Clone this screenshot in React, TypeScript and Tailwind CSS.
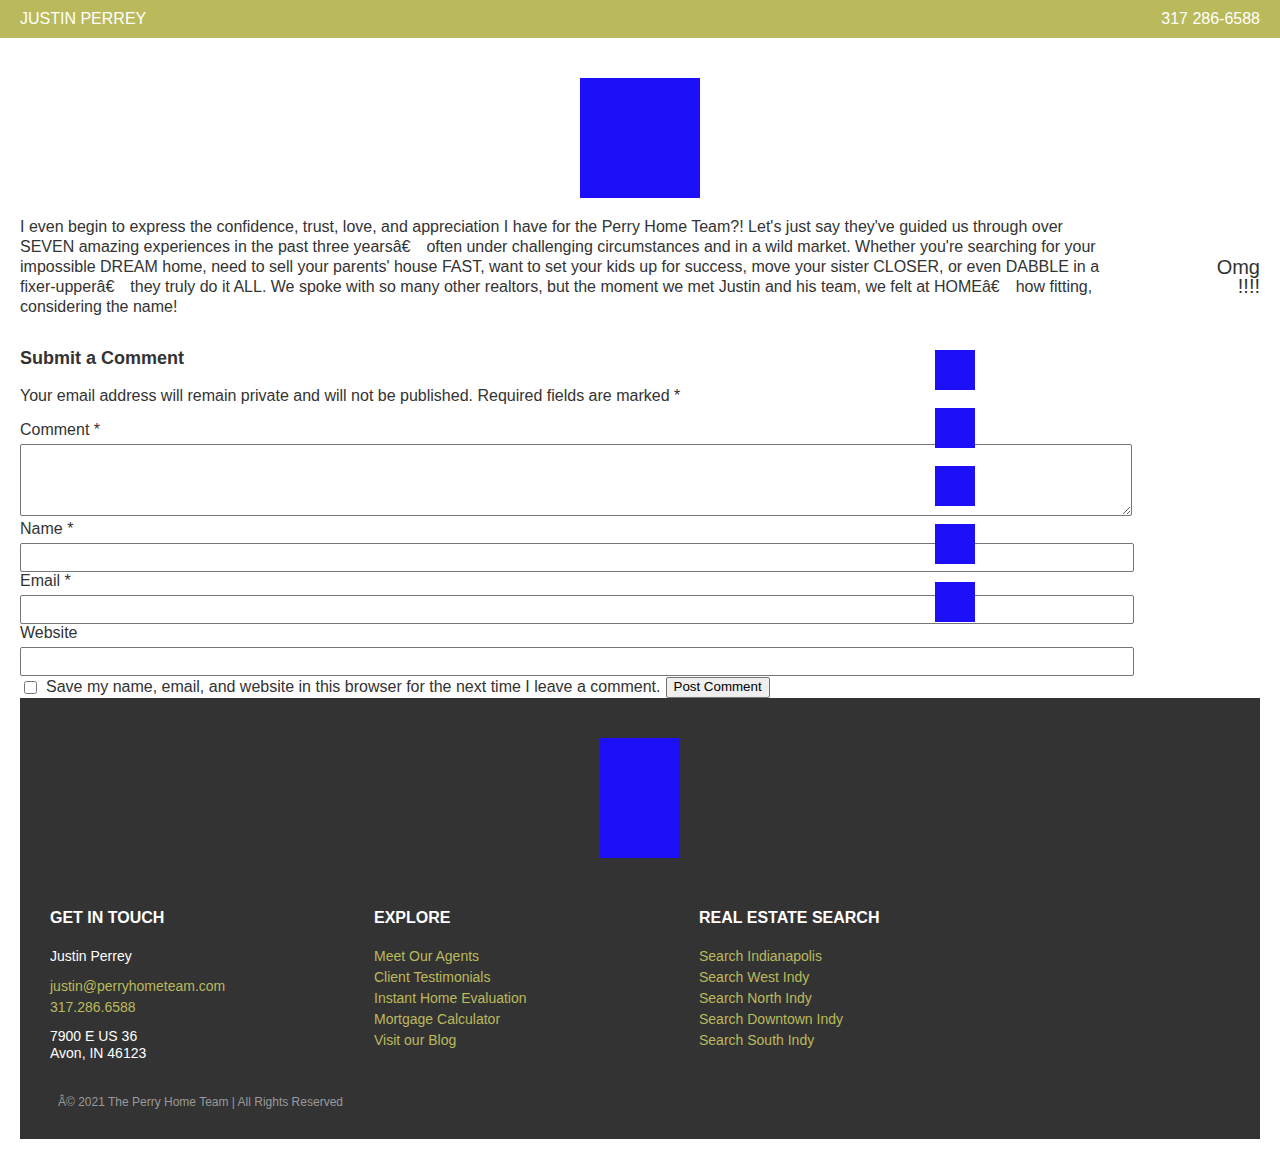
import React from "react";

const BLUE = "bg-[#1d10f8]";

export default function App() {
  const explore = ["Meet Our Agents", "Client Testimonials", "Instant Home Evaluation", "Mortgage Calculator", "Visit our Blog"];
  const search = ["Search Indianapolis", "Search West Indy", "Search North Indy", "Search Downtown Indy", "Search South Indy"];
  const gap = <span className="inline-block w-[16px]"></span>;
  return (
    <div className="relative bg-white text-[#333] min-h-[1159px]" style={{ fontFamily: '"Liberation Sans", Arial, sans-serif' }}>
      <header className="h-[38px] bg-[#baba5c] flex items-center justify-between px-5 text-white text-[16px]">
        <span>JUSTIN PERREY</span>
        <span>317 286-6588</span>
      </header>

      <main className="px-5">
        <div className="pt-10 flex justify-center">
          <div className={`w-[120px] h-[120px] ${BLUE}`}></div>
        </div>
        <div className="mt-[19px] flex">
          <p className="w-[1090px] text-[16px] leading-[20px]">
            I even begin to express the confidence, trust, love, and appreciation I have for the Perry Home Team?! Let's just say they've guided us through over SEVEN amazing experiences in the past three yearsâ€{gap}often under challenging circumstances and in a wild market. Whether you're searching for your impossible DREAM home, need to sell your parents' house FAST, want to set your kids up for success, move your sister CLOSER, or even DABBLE in a fixer-upperâ€{gap}they truly do it ALL. We spoke with so many other realtors, but the moment we met Justin and his team, we felt at HOMEâ€{gap}how fitting, considering the name!
          </p>
          <div className="flex-1 flex justify-end pt-[41px]">
            <div className="w-[44px] text-right text-[20px] leading-[19px]">Omg !!!!</div>
          </div>
        </div>

        <h3 className="mt-[31px] text-[18px] leading-[21px] font-bold">Submit a Comment</h3>
        <p className="mt-[18px] text-[16px] leading-[18px]">Your email address will remain private and will not be published. Required fields are marked *</p>
        <label className="block mt-[17px] text-[16px] leading-[16px]">Comment *</label>
        <textarea className="block mt-[6px] w-[1112px] h-[72px] border border-[#767676] rounded-[2px] bg-white"></textarea>
        <label className="block mt-[5px] text-[16px] leading-[16px]">Name *</label>
        <input className="block mt-[6px] w-[1114px] h-[29px] border border-[#767676] rounded-[2px] bg-white" />
        <label className="block mt-[1px] text-[16px] leading-[16px]">Email *</label>
        <input className="block mt-[6px] w-[1114px] h-[29px] border border-[#767676] rounded-[2px] bg-white" />
        <label className="block mt-[1px] text-[16px] leading-[16px]">Website</label>
        <input className="block mt-[6px] w-[1114px] h-[29px] border border-[#767676] rounded-[2px] bg-white" />
        <div className="flex items-center h-[22px] text-[16px]">
          <input type="checkbox" className="ml-[4px] mr-[9px] w-[13px] h-[13px]" />
          <span>Save my name, email, and website in this browser for the next time I leave a comment.</span>
          <button className="ml-[5px] h-[21px] px-[7px] text-[13.33px] leading-[16px] text-black bg-[#efefef] border border-[#767676] rounded-[2px]">Post Comment</button>
        </div>
      </main>

      <footer className="mx-5 bg-[#333] pt-10 pb-[30px]">
        <div className={`mx-auto w-[80px] h-[120px] ${BLUE}`}></div>
        <div className="mt-[51px] pl-[30px] grid grid-cols-[324px_325px_325px]">
          <div>
            <h4 className="text-white font-bold text-[16px] leading-[18px]">GET IN TOUCH</h4>
            <div className="mt-[19px] text-white text-[14px] leading-[21px]">Justin Perrey</div>
            <div className="mt-[9px] text-[#baba5c] text-[14px] leading-[21px]">justin@perryhometeam.com</div>
            <div className="text-[#baba5c] text-[14px] leading-[21px]">317.286.6588</div>
            <div className="mt-[10px] text-white text-[14px] leading-[17px]">7900 E US 36<br />Avon, IN 46123</div>
          </div>
          <div>
            <h4 className="text-white font-bold text-[16px] leading-[18px]">EXPLORE</h4>
            <ul className="mt-[19px]">
              {explore.map((t) => (
                <li key={t} className="text-[#baba5c] text-[14px] leading-[21px]">{t}</li>
              ))}
            </ul>
          </div>
          <div>
            <h4 className="text-white font-bold text-[16px] leading-[18px]">REAL ESTATE SEARCH</h4>
            <ul className="mt-[19px]">
              {search.map((t) => (
                <li key={t} className="text-[#baba5c] text-[14px] leading-[21px]">{t}</li>
              ))}
            </ul>
          </div>
        </div>
        <div className="mt-[33px] pl-[38px] text-[12px] leading-[14px] text-[#9a9a9a]">Â© 2021 The Perry Home Team | All Rights Reserved</div>
      </footer>
      <div className="h-5"></div>

      {[350, 408, 466, 524, 582].map((t) => (
        <div key={t} className={`absolute left-[935px] w-[40px] h-[40px] ${BLUE}`} style={{ top: t }}></div>
      ))}
    </div>
  );
}
